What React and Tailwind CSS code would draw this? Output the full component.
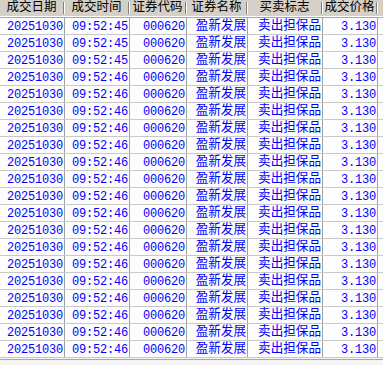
import React from 'react';

const cols = [
  { title: '成交日期', w: 'w-[65px]' },
  { title: '成交时间', w: 'w-[65px]' },
  { title: '证券代码', w: 'w-[57px]' },
  { title: '证券名称', w: 'w-[61px]' },
  { title: '买卖标志', w: 'w-[75px]' },
  { title: '成交价格', w: 'w-[55px]' },
];

const rows = Array.from({ length: 20 }, (_, i) => [
  '20251030',
  i < 3 ? '09:52:45' : '09:52:46',
  '000620',
  '盈新发展',
  '卖出担保品',
  '3.130',
]);

const font = { fontFamily: '"Liberation Mono", "Noto Sans CJK SC", monospace' };

export default function App() {
  return (
    <div className="w-[383px] h-[365px] bg-[#f4f4f4] overflow-hidden text-[12px]" style={font}>
      {/* header */}
      <div className="flex h-[17px] bg-[#d4d0c8] border-b border-white">
        {cols.map((c) => (
          <div key={c.title} className={`${c.w} shrink-0 flex items-center`}>
            <span className="flex-1 text-center text-black text-[12.5px] leading-none">{c.title}</span>
            <span className="w-[2px] h-[12px] border-l border-[#808080] border-r border-r-white" />
          </div>
        ))}
        <div className="flex-1 flex items-center pl-[2px] text-black text-[12.5px] leading-none overflow-hidden">
          <span>|</span>
        </div>
      </div>
      {/* body */}
      <div className="border-t border-b border-[#a8a8a8] pb-[1px] w-full">
        {rows.map((r, i) => (
          <div key={i} className="flex h-[17px] bg-[#fdfdfd] border-b border-[#c8c8c8]">
            {r.map((v, j) => (
              <div
                key={j}
                className={`${cols[j].w} shrink-0 border-r border-[#a0a0a0] flex items-center justify-end pr-[1px] pt-[1px] text-[#0000ff] leading-none ${
                  j === 3 || j === 4 ? 'text-[12.6px]' : 'text-[12px] tracking-[-0.2px]'
                }`}
              >
                {v}
              </div>
            ))}
            <div className="flex-1" />
          </div>
        ))}
      </div>
    </div>
  );
}
